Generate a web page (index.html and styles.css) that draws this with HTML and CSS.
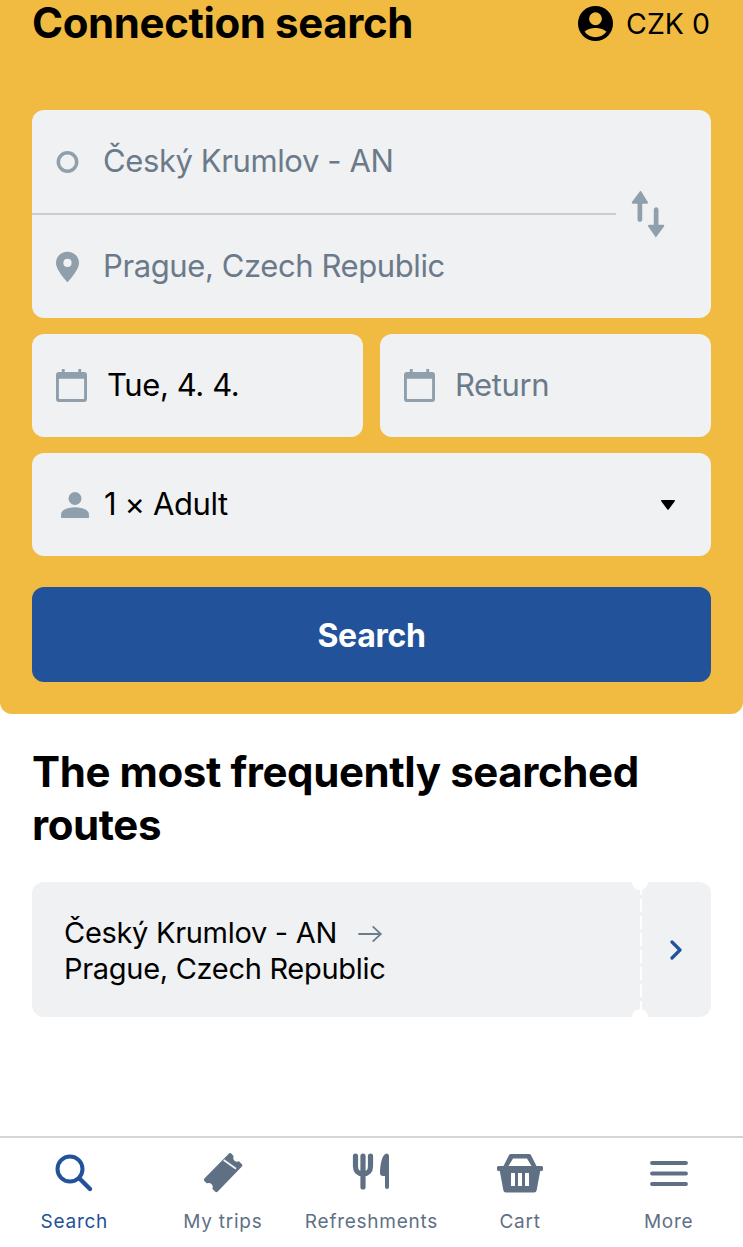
FILE: index.html
```html
<!DOCTYPE html>
<html lang="en">
<head>
  <meta charset="UTF-8" />
  <meta name="viewport" content="width=device-width, initial-scale=1.0"/>
  <title>Connection search</title>
  <link rel="stylesheet" href="styles.css">
</head>
<body>
  <div class="app">
    <div class="search-panel">
      <div class="top-row">
        <h1>Connection search</h1>
        <div class="account">
          <svg class="account-icon" viewBox="0 0 38 38"><path fill="#000" fill-rule="evenodd" d="M19 1a18 18 0 1 0 0 36 18 18 0 0 0 0-36zm0 6.5a6.6 6.6 0 1 1 0 13.2 6.6 6.6 0 0 1 0-13.2zm0 25.6c-4.6 0-8.7-2.2-11.2-5.6 1.9-2.6 7.4-4 11.2-4s9.3 1.400 11.2 4c-2.5 3.4-6.6 5.6-11.2 5.6z"/></svg>
          <span>CZK 0</span>
        </div>
      </div>

      <div class="route-box">
        <div class="route-fields">
          <div class="route-field">
            <svg class="field-icon" viewBox="0 0 24 24"><circle cx="12" cy="12" r="9.6" fill="none" stroke="#8fa0ac" stroke-width="3.6"/></svg>
            <span class="placeholder">Český Krumlov - AN</span>
          </div>
          <div class="route-field second">
            <svg class="field-icon" viewBox="0 0 24 32"><path fill="#8fa0ac" fill-rule="evenodd" d="M12 0C5.2 0 0 5.2 0 11.8 0 19.5 12 32 12 32s12-12.5 12-20.2C24 5.2 18.800 0 12 0zm0 16a4.300 4.300 0 1 1 0-8.600 4.300 4.300 0 0 1 0 8.600z"/></svg>
            <span class="placeholder">Prague, Czech Republic</span>
          </div>
        </div>
        <svg class="swap-icon" viewBox="0 0 34 48"><path fill="#8fa0ac" d="M9 0 .6 11.300c-.5.700 0 1.700.9 1.700h4.800v16c0 1.300 1.100 2.400 2.400 2.400s2.400-1.100 2.400-2.400V13h4.800c.9 0 1.400-1 .9-1.700L9.800 0H9zM25 47.500l8.400-11.300c.5-.7 0-1.700-.9-1.700h-4.800V19c0-1.300-1.100-2.400-2.400-2.400s-2.400 1.100-2.400 2.400v15.500h-4.800c-.9 0-1.400 1-.9 1.700l7.800 11.300z"/></svg>
      </div>

      <div class="date-row">
        <div class="field">
          <svg class="calendar-icon" viewBox="0 0 32 34"><path fill="#8fa0ac" fill-rule="evenodd" d="M6 0h3v3h14V0h3v3h3a3 3 0 0 1 3 3v25a3 3 0 0 1-3 3H3a3 3 0 0 1-3-3V6a3 3 0 0 1 3-3h3V0zM3 10v20.500c0 .3.200.5.500.5h25c.3 0 .5-.2.500-.5V10H3z"/></svg>
          <span class="value">Tue, 4. 4.</span>
        </div>
        <div class="field">
          <svg class="calendar-icon" viewBox="0 0 32 34"><path fill="#8fa0ac" fill-rule="evenodd" d="M6 0h3v3h14V0h3v3h3a3 3 0 0 1 3 3v25a3 3 0 0 1-3 3H3a3 3 0 0 1-3-3V6a3 3 0 0 1 3-3h3V0zM3 10v20.500c0 .3.200.5.500.5h25c.3 0 .5-.2.500-.5V10H3z"/></svg>
          <span class="placeholder">Return</span>
        </div>
      </div>

      <div class="field passengers">
        <svg class="person-icon" viewBox="0 0 30 28"><circle cx="15" cy="7" r="7" fill="#8fa0ac"/><path fill="#8fa0ac" d="M0 28v-4c0-5 8-7.500 15-7.500S30 19 30 24v4H0z"/></svg>
        <span class="value">1 × Adult</span>
        <svg class="caret" viewBox="0 0 14 10"><path fill="#000" d="M.8 0h12.400c.7 0 1 .8.600 1.300L7.600 9.500c-.3.400-.9.400-1.200 0L.2 1.300C-.2.800.1 0 .8 0z"/></svg>
      </div>

      <button class="search-btn">Search</button>
    </div>

    <div class="routes">
      <h2>The most frequently searched routes</h2>
      <div class="ticket">
        <div class="ticket-text">
          <div>Český Krumlov - AN<svg class="ticket-arrow" viewBox="0 0 28 20"><path fill="none" stroke="#6b7c8c" stroke-width="2" d="M1 10h25M17 1.500l9 8.500-9 8.500"/></svg></div>
          <div>Prague, Czech Republic</div>
        </div>
        <div class="ticket-end">
          <svg class="chevron" viewBox="0 0 12 20"><path fill="none" stroke="#22539a" stroke-width="3.200" stroke-linecap="round" stroke-linejoin="round" d="M2 2l8 8-8 8"/></svg>
        </div>
      </div>
    </div>

    <nav class="tabbar">
      <div class="tab active">
        <svg viewBox="0 0 40 40"><circle cx="16" cy="16" r="12.500" fill="none" stroke="#22539a" stroke-width="4"/><path stroke="#22539a" stroke-width="4.400" stroke-linecap="round" d="M25.500 25.500 36 36"/></svg>
        <span>Search</span>
      </div>
      <div class="tab">
        <svg viewBox="0 0 40 40"><path fill="#5f7085" d="M26 .500c.7-.6 1.700-.6 2.300.1l2.400 2.600c-.8 1.500-.5 3.300.8 4.500 1.200 1.100 3 1.300 4.500.6l2.900 3c.6.600.6 1.600 0 2.200L14.500 38.800c-.6.600-1.600.6-2.200 0l-3-3.100c.8-1.500.6-3.300-.7-4.500-1.300-1.300-3.100-1.500-4.600-.7l-2.600-2.600c-.6-.6-.6-1.600 0-2.300L26 .500z"/><path stroke="#f2f4f6" stroke-width="1.800" d="M20.700 7 33 15.700"/></svg>
        <span>My trips</span>
      </div>
      <div class="tab">
        <svg viewBox="0 0 46 40"><path fill="none" stroke="#5f7085" stroke-width="5.200" stroke-linecap="round" d="M7.500 3v10.500c0 4.500 3 7.500 7.500 7.500s7.500-3 7.500-7.500V3M15 3v31"/><path fill="#5f7085" d="M38.500.5c1.500 0 2.500 1 2.500 2.500v31a2 2 0 0 1-4 0V23h-2c-2 0-3-1-3-3 0-8 2-19 6.500-19.500z"/></svg>
        <span>Refreshments</span>
      </div>
      <div class="tab">
        <svg viewBox="0 0 46 40"><path fill="#5f7085" fill-rule="evenodd" d="M14 1h18c.8 0 1.500.4 1.900 1.100L39.500 13H44a2 2 0 0 1 0 5h-.8l-3.500 19c-.3 1.700-1.300 2.500-2.800 2.500H9.100c-1.500 0-2.500-.8-2.800-2.500L2.800 18H2a2 2 0 0 1 0-5h4.500l5.600-10.900C12.500 1.400 13.200 1 14 1zm2 4.500L11.500 13h23L30 5.500H16zM14 20v13h4V20h-4zm7 0v13h4V20h-4zm7 0v13h4V20h-4z"/></svg>
        <span>Cart</span>
      </div>
      <div class="tab">
        <svg viewBox="0 0 40 40"><path stroke="#5f7085" stroke-width="3.800" stroke-linecap="round" d="M3 10h34M3 20.500h34M3 31h34"/></svg>
        <span>More</span>
      </div>
    </nav>
  </div>
</body>
</html>
```

FILE: styles.css
```css
html, body {
  margin: 0;
  padding: 0;
  height: 100%;
  overflow: hidden;
  font-family: Inter, 'Liberation Sans', sans-serif;
  background: #fff;
  color: #000;
}
.app {
  height: 1247px;
  display: flex;
  flex-direction: column;
}
.search-panel {
  background: #f0bb40;
  border-radius: 0 0 12px 12px;
  padding: 0 32px 32px;
  height: 714px;
  box-sizing: border-box;
  display: flex;
  flex-direction: column;
}
.top-row {
  height: 110px;
  flex-shrink: 0;
  display: flex;
  justify-content: space-between;
  align-items: flex-start;
}
h1 {
  font-size: 42px;
  font-weight: 700;
  line-height: 46px;
  margin: 0;
  letter-spacing: -0.4px;
}
.account {
  display: flex;
  align-items: center;
  gap: 12px;
  height: 46px;
  margin-right: 1px;
  font-size: 28.5px;
}
.account-icon {
  width: 37px;
  height: 37px;
}
.route-box {
  background: #f0f1f3;
  border-radius: 12px;
  height: 208px;
  display: flex;
  flex-shrink: 0;
}
.route-fields {
  width: 584px;
  display: flex;
  flex-direction: column;
}
.route-field {
  flex: 1;
  display: flex;
  align-items: center;
  gap: 24px;
  padding-left: 24px;
}
.route-field.second {
  border-top: 2px solid #c7ced4;
}
.field-icon {
  width: 23px;
  height: 32px;
  flex-shrink: 0;
}
.swap-icon {
  width: 34px;
  height: 47px;
  margin: 81px 0 0 15px;
}
.placeholder {
  font-size: 31px;
  letter-spacing: -0.4px;
  color: #6b7a8a;
  margin-bottom: 2px;
}
.value {
  font-size: 31px;
  letter-spacing: -0.4px;
  color: #000;
  margin-bottom: 2px;
}
.date-row {
  display: flex;
  gap: 17px;
  margin-top: 16px;
}
.field {
  flex: 1;
  height: 103px;
  background: #f0f1f3;
  border-radius: 12px;
  display: flex;
  align-items: center;
  padding-left: 24px;
  gap: 20px;
}
.calendar-icon {
  width: 31px;
  height: 33px;
  flex-shrink: 0;
}
.passengers {
  flex: none;
  margin-top: 16px;
  gap: 15px;
  padding-left: 29px;
  padding-right: 36px;
}
.person-icon {
  width: 28px;
  height: 26px;
}
.caret {
  width: 14px;
  height: 10px;
  margin-left: auto;
}
.search-btn {
  margin-top: 31px;
  height: 95px;
  padding-top: 3px;
  border: none;
  border-radius: 12px;
  background: #22539a;
  color: #fff;
  font-family: inherit;
  font-size: 32px;
  font-weight: 700;
  letter-spacing: -0.3px;
}
.routes {
  padding: 31px 32px 0;
}
h2 {
  font-size: 42px;
  font-weight: 700;
  line-height: 53px;
  margin: 0 0 31px;
  letter-spacing: -0.4px;
}
.ticket {
  height: 135px;
  display: flex;
  position: relative;
}
.ticket-text {
  flex: 1;
  background: #f0f1f3;
  border-radius: 12px 0 0 12px;
  padding-left: 32px;
  padding-top: 2px;
  font-size: 29px;
  letter-spacing: -0.3px;
  line-height: 36px;
  display: flex;
  flex-direction: column;
  justify-content: center;
}
.ticket-arrow {
  width: 26px;
  height: 18px;
  margin-left: 20px;
}
.ticket-end {
  width: 71px;
  background: repeating-linear-gradient(#fff 0 13px, transparent 13px 17px) no-repeat left / 2px 100%, #f0f1f3;
  border-radius: 0 12px 12px 0;
  display: flex;
  align-items: center;
  justify-content: center;
}
.ticket::before, .ticket::after {
  content: '';
  position: absolute;
  right: 63px;
  width: 16px;
  height: 16px;
  border-radius: 50%;
  background: #fff;
}
.ticket::before { top: -8px; }
.ticket::after { bottom: -8px; }
.chevron {
  width: 12px;
  height: 20px;
}
.tabbar {
  margin-top: auto;
  height: 111px;
  box-sizing: border-box;
  border-top: 2px solid #d3d5da;
  display: flex;
}
.tab {
  flex: 1;
  display: flex;
  flex-direction: column;
  align-items: center;
  padding-top: 15px;
  gap: 17px;
  font-size: 19px;
  letter-spacing: 0.75px;
  color: #5f7085;
}
.tab svg {
  height: 40px;
  width: 46px;
}
.tab.active {
  color: #22539a;
}
```
